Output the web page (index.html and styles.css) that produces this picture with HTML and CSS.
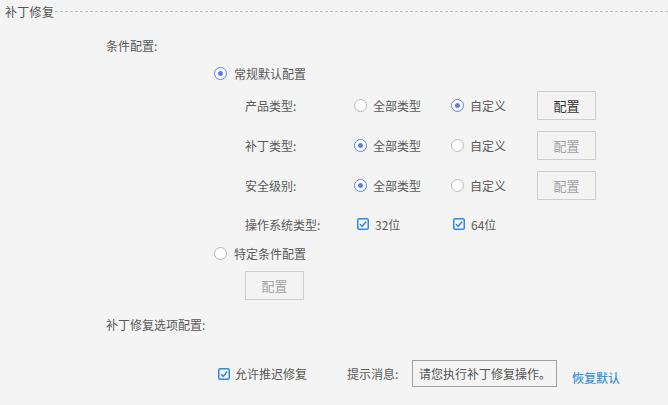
FILE: index.html
```html
<!DOCTYPE html>
<html lang="zh">
<head>
<meta charset="utf-8">
<link rel="stylesheet" href="styles.css">
</head>
<body>
<div class="page">
  <div class="header">
    <span class="title">补丁修复</span>
    <span class="dash"></span>
  </div>

  <div class="sec-label">条件配置:</div>

  <div class="main-radio">
    <span class="radio on"></span><span class="rtext">常规默认配置</span>
  </div>

  <div class="sub-row">
    <span class="sub-label">产品类型:</span>
    <span class="opt opt1"><span class="radio"></span><span>全部类型</span></span>
    <span class="opt opt2"><span class="radio on"></span><span>自定义</span></span>
    <span class="btn">配置</span>
  </div>
  <div class="sub-row">
    <span class="sub-label">补丁类型:</span>
    <span class="opt opt1"><span class="radio on"></span><span>全部类型</span></span>
    <span class="opt opt2"><span class="radio"></span><span>自定义</span></span>
    <span class="btn disabled">配置</span>
  </div>
  <div class="sub-row">
    <span class="sub-label">安全级别:</span>
    <span class="opt opt1"><span class="radio on"></span><span>全部类型</span></span>
    <span class="opt opt2"><span class="radio"></span><span>自定义</span></span>
    <span class="btn disabled">配置</span>
  </div>
  <div class="sub-row os-row">
    <span class="sub-label">操作系统类型:</span>
    <span class="chk-opt c1"><span class="check"><svg viewBox="0 0 12 12" width="12" height="12"><rect x="0.75" y="0.75" width="10.5" height="10.5" rx="1.5" fill="none" stroke="#2f8ae0" stroke-width="1.5"/><path d="M3 6.2 L5.2 8.4 L9.2 3.6" fill="none" stroke="#2f8ae0" stroke-width="1.5"/></svg></span><span>32位</span></span>
    <span class="chk-opt c2"><span class="check"><svg viewBox="0 0 12 12" width="12" height="12"><rect x="0.75" y="0.75" width="10.5" height="10.5" rx="1.5" fill="none" stroke="#2f8ae0" stroke-width="1.5"/><path d="M3 6.2 L5.2 8.4 L9.2 3.6" fill="none" stroke="#2f8ae0" stroke-width="1.5"/></svg></span><span>64位</span></span>
  </div>

  <div class="main-radio special">
    <span class="radio"></span><span class="rtext">特定条件配置</span>
  </div>
  <div class="special-btn-row">
    <span class="btn disabled">配置</span>
  </div>

  <div class="sec-label opts-label">补丁修复选项配置:</div>

  <div class="bottom-row">
    <span class="chk-opt allow"><span class="check"><svg viewBox="0 0 12 12" width="12" height="12"><rect x="0.75" y="0.75" width="10.5" height="10.5" rx="1.5" fill="none" stroke="#2f8ae0" stroke-width="1.5"/><path d="M3 6.2 L5.2 8.4 L9.2 3.6" fill="none" stroke="#2f8ae0" stroke-width="1.5"/></svg></span><span>允许推迟修复</span></span>
    <span class="msg-label">提示消息:</span>
    <span class="msg-input">请您执行补丁修复操作。</span>
    <span class="link">恢复默认</span>
  </div>
</div>
</body>
</html>
```

FILE: styles.css
```css
html, body {
  margin: 0;
  padding: 0;
  background: #f4f4f4;
}
body {
  width: 668px;
  height: 405px;
  overflow: hidden;
  font-family: "Noto Sans CJK SC", "Noto Sans", sans-serif;
  font-size: 12px;
  color: #595959;
}
.page {
  display: flex;
  flex-direction: column;
}
.header {
  display: flex;
  align-items: center;
  height: 22px;
  padding-left: 5px;
}
.title {
  font-size: 12px;
  color: #555;
  letter-spacing: 0.3px;
}
.dash {
  flex: 1;
  border-top: 1px dashed #c4c4c4;
  margin-left: 1px;
}
.sec-label {
  height: 22px;
  line-height: 22px;
  margin-top: 13px;
  padding-left: 106px;
}
.main-radio {
  display: flex;
  align-items: center;
  height: 22px;
  margin-top: 5px;
  padding-left: 214px;
}
.rtext {
  margin-left: 7px;
}
.radio {
  display: inline-block;
  box-sizing: border-box;
  width: 13px;
  height: 13px;
  border-radius: 50%;
  border: 1px solid #b8b8b8;
  background: #fff;
  position: relative;
  flex: none;
}
.radio.on {
  border-color: #5f80e0;
}
.radio.on::after {
  content: "";
  position: absolute;
  left: 3px;
  top: 3px;
  width: 5px;
  height: 5px;
  border-radius: 50%;
  background: #5f80e0;
}
.sub-row {
  display: flex;
  align-items: center;
  height: 40px;
  padding-left: 245px;
}
.main-radio + .sub-row {
  margin-top: 1px;
}
.sub-label {
  width: 109px;
}
.opt {
  display: flex;
  align-items: center;
  gap: 6px;
}
.opt1 {
  width: 97px;
}
.opt2 {
  width: 86px;
}
.btn {
  display: inline-flex;
  align-items: center;
  justify-content: center;
  box-sizing: border-box;
  width: 59px;
  height: 29px;
  border: 1px solid #cfcfcf;
  color: #333;
  font-size: 13px;
}
.btn.disabled {
  color: #a3a3a3;
}
.os-row {
  height: 38px;
}
.chk-opt {
  display: flex;
  align-items: center;
  gap: 6px;
}
.check {
  display: inline-flex;
  width: 12px;
  height: 12px;
}
.c1 {
  width: 96px;
  margin-left: 3px;
}
.special {
  height: 20px;
  margin-top: 0;
}
.special-btn-row {
  display: flex;
  margin-top: 8px;
  padding-left: 245px;
}
.opts-label {
  margin-top: 14px;
}
.bottom-row {
  display: flex;
  align-items: center;
  height: 27px;
  margin-top: 24px;
  padding-left: 218px;
}
.allow {
  width: 129px;
  gap: 5px;
}
.msg-label {
  width: 65px;
}
.msg-input {
  display: inline-flex;
  align-items: center;
  box-sizing: border-box;
  width: 145px;
  height: 27px;
  border: 1px solid #a0a0a0;
  padding-left: 6px;
  font-size: 12px;
  white-space: nowrap;
  overflow: hidden;
  color: #555;
}
.link {
  margin-left: 15px;
  margin-top: 7px;
  color: #3a8fd9;
  font-weight: 500;
}
```
